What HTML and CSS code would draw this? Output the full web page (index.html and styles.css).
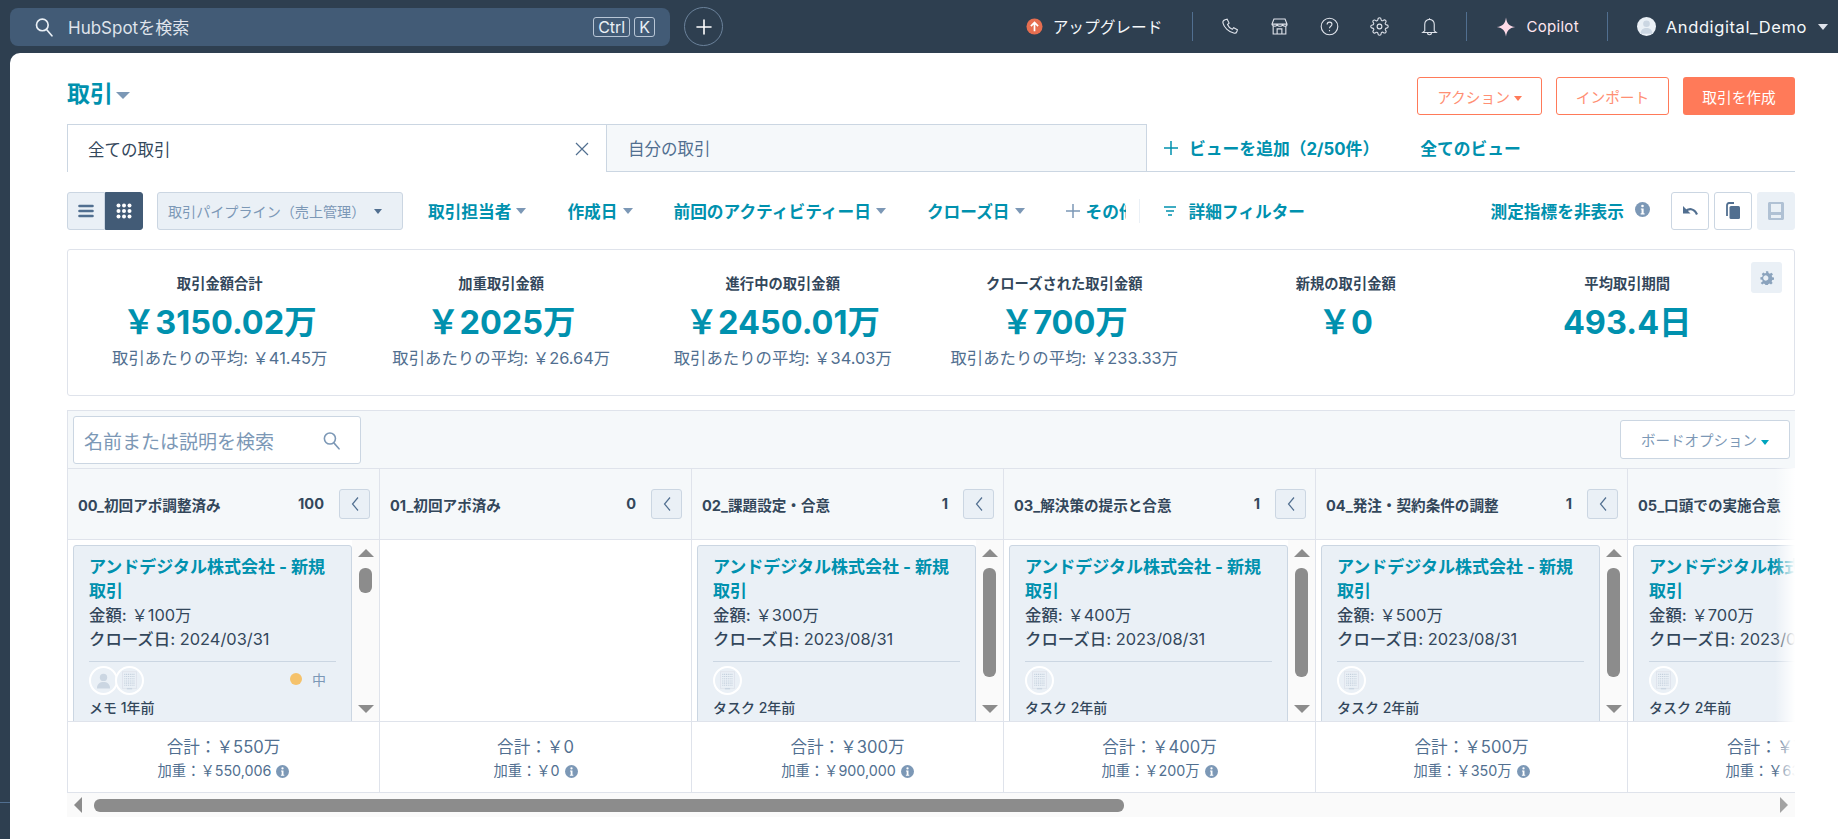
FILE: index.html
```html
<!DOCTYPE html>
<html lang="ja">

<head>
  <meta charset="UTF-8">
  <title>取引</title>
  <link rel="stylesheet" href="styles.css">
</head>

<body>
  <svg class="sprite">
    <symbol id="i-search" viewBox="0 0 24 24"><circle cx="10" cy="9.5" r="7" fill="none" stroke="currentColor" stroke-width="2"/><path d="M15 15l6.5 7.5" fill="none" stroke="currentColor" stroke-width="2" stroke-linecap="round"/></symbol>
    <symbol id="i-info" viewBox="0 0 16 16"><circle cx="8" cy="8" r="8" fill="#7c98b6"/><circle cx="8" cy="4.2" r="1.4" fill="#fff"/><path d="M6.2 6.8h3v5.2h1v1.2H6v-1.2h1V8H6.2z" fill="#fff"/></symbol>
    <symbol id="i-building" viewBox="0 0 24 24"><rect x="3.5" y="1.5" width="17" height="20" fill="#dfe3eb"/><rect x="4.5" y="2.5" width="15" height="18" fill="#eaf0f6"/><path d="M6 5h12M6 7.5h12M6 10h12M6 12.5h12M6 15h12M6 17.5h12" stroke="#c3cfdc" stroke-width="1.2" stroke-dasharray="1.2 .9"/><rect x="9" y="20.5" width="6" height="1.6" fill="#cbd6e2"/></symbol>
    <symbol id="i-person" viewBox="0 0 24 24"><circle cx="12" cy="8.5" r="4.2" fill="#cbd6e2"/><path d="M4.5 21c0-5 3.5-7.2 7.5-7.2s7.5 2.2 7.5 7.2z" fill="#cbd6e2"/></symbol>
  </svg>

  <header class="topbar">
    <div class="global-search">
      <svg class="global-search-icon"><use href="#i-search"/></svg>
      <span class="global-search-text">HubSpotを検索</span>
      <span class="key">Ctrl</span>
      <span class="key">K</span>
    </div>
    <button class="add-btn">
      <svg viewBox="0 0 16 16" width="16" height="16"><path d="M8 1v14M1 8h14" stroke="#fff" stroke-width="1.6" stroke-linecap="round"/></svg>
    </button>

    <div class="top-right">
      <svg class="upgrade-icon" viewBox="0 0 18 18"><circle cx="9" cy="9" r="8.5" fill="#e66e50"/><path d="M9 14V5M5.2 8.5L9 4.7l3.8 3.8" fill="none" stroke="#fff" stroke-width="1.8"/></svg>
      <span class="upgrade-text">アップグレード</span>
      <span class="top-divider divider-upgrade"></span>
      <div class="top-icons">
        <svg viewBox="0 0 24 24"><path d="M6.5 3.5l2.5-.8 2.5 5-2 1.800c1 2.700 3.300 5 6 6l1.800-2 4.700 2.700-.8 2.400c-.5 1.500-2.200 2.200-3.900 1.700C10.500 18.400 5 13 3.700 7.300 3.300 5.600 4.900 4 6.500 3.500z" /></svg>
        <svg viewBox="0 0 24 24"><path d="M5 2.500h14l2.500 6.500c0 1.600-1.300 2.600-2.800 2.600S16 10.600 16 9.300c0 1.300-1.300 2.300-2.800 2.300H12c-1.500 0-3-1-3-2.300 0 1.300-1.300 2.300-2.800 2.300-1.500 0-3.700-1-3.700-2.600zM2.500 9h19M4 11.500v10h16v-10M9 21.500V15h6v6.500" /></svg>
        <svg viewBox="0 0 24 24"><circle cx="12" cy="12" r="10.5"/><path d="M9 9.500c0-1.900 1.400-3 3.100-3s3 1.200 3 2.800c0 2.400-3.100 2.400-3.100 5"/><path d="M12 16.500v1.500"/></svg>
        <svg viewBox="0 0 24 24"><circle cx="12" cy="12" r="3"/><path d="M19.400 15a1.650 1.650 0 0 0 .33 1.820l.06.06a2 2 0 0 1 0 2.830 2 2 0 0 1-2.830 0l-.06-.06a1.650 1.650 0 0 0-1.820-.33 1.650 1.650 0 0 0-1 1.510V21a2 2 0 0 1-2 2 2 2 0 0 1-2-2v-.09A1.650 1.650 0 0 0 9 19.400a1.650 1.650 0 0 0-1.820.33l-.06.06a2 2 0 0 1-2.830 0 2 2 0 0 1 0-2.830l.06-.06a1.650 1.650 0 0 0 .33-1.820 1.650 1.650 0 0 0-1.510-1H3a2 2 0 0 1-2-2 2 2 0 0 1 2-2h.09A1.650 1.650 0 0 0 4.600 9a1.650 1.650 0 0 0-.33-1.820l-.06-.06a2 2 0 0 1 0-2.830 2 2 0 0 1 2.830 0l.06.06a1.650 1.650 0 0 0 1.820.33H9a1.650 1.650 0 0 0 1-1.510V3a2 2 0 0 1 2-2 2 2 0 0 1 2 2v.09a1.650 1.650 0 0 0 1 1.510 1.650 1.650 0 0 0 1.820-.33l.06-.06a2 2 0 0 1 2.830 0 2 2 0 0 1 0 2.830l-.06.06a1.650 1.650 0 0 0-.33 1.820V9a1.650 1.650 0 0 0 1.510 1H21a2 2 0 0 1 2 2 2 2 0 0 1-2 2h-.09a1.650 1.650 0 0 0-1.510 1z"/></svg>
        <svg viewBox="0 0 24 24"><path d="M6 17.500V9a6 6 0 0 1 12 0v8.500l2.500 2h-17zM12 3V1.500M9.500 20a2.500 2.500 0 0 0 5 0"/></svg>
      </div>
      <span class="top-divider divider-icons"></span>
      <svg class="copilot-icon" viewBox="0 0 24 24"><path d="M12 .5c.9 7.200 3.800 10.300 11 11.500-7.200 1.200-10.100 4.300-11 11.500C11.100 16.300 8.200 13.200 1 12 8.200 10.800 11.100 7.700 12 .5z" fill="#ffdbe8"/></svg>
      <span class="copilot-text">Copilot</span>
      <span class="top-divider divider-copilot"></span>
      <span class="user-avatar"><svg viewBox="0 0 24 24" width="19" height="19"><use href="#i-person"/></svg></span>
      <span class="user-name">Anddigital_Demo</span>
      <span class="caret caret-user"></span>
    </div>
  </header>

  <main class="page">
    <div class="page-head">
      <h1 class="page-title">取引<span class="caret caret-title"></span></h1>
      <div class="page-actions">
        <button class="btn btn-outline btn-action">アクション<span class="caret caret-orange"></span></button>
        <button class="btn btn-outline btn-import">インポート</button>
        <button class="btn btn-primary">取引を作成</button>
      </div>
    </div>

    <div class="tabs">
      <div class="tab tab-active">
        <span>全ての取引</span>
        <svg viewBox="0 0 14 14" width="14" height="14"><path d="M1 1l12 12M13 1L1 13" stroke="#516f90" stroke-width="1.2"/></svg>
      </div>
      <div class="tab tab-other">自分の取引</div>
      <div class="tabs-rest">
        <svg viewBox="0 0 14 14" width="14" height="14"><path d="M7 0v14M0 7h14" stroke="#0091ae" stroke-width="1.5"/></svg>
        <span class="tabs-add">ビューを追加（2/50件）</span>
        <span class="tabs-all">全てのビュー</span>
      </div>
    </div>

    <div class="toolbar">
      <div class="view-toggle">
        <span class="toggle-btn">
          <svg viewBox="0 0 16 14" width="16" height="14"><path d="M1.5 2h13M1.5 7h13M1.5 12h13" stroke="#516f90" stroke-width="2.6" stroke-linecap="round"/></svg>
        </span>
        <span class="toggle-btn toggle-on">
          <svg viewBox="0 0 16 16" width="16" height="16" fill="#fff"><circle cx="2.5" cy="2.5" r="2"/><circle cx="8" cy="2.5" r="2"/><circle cx="13.5" cy="2.5" r="2"/><circle cx="2.5" cy="8" r="2"/><circle cx="8" cy="8" r="2"/><circle cx="13.5" cy="8" r="2"/><circle cx="2.5" cy="13.5" r="2"/><circle cx="8" cy="13.5" r="2"/><circle cx="13.5" cy="13.5" r="2"/></svg>
        </span>
      </div>
      <div class="pipeline-select">取引パイプライン（売上管理）<span class="caret caret-dark"></span></div>
      <span class="filter filter-first">取引担当者<span class="caret"></span></span>
      <span class="filter">作成日<span class="caret"></span></span>
      <span class="filter">前回のアクティビティー日<span class="caret"></span></span>
      <span class="filter">クローズ日<span class="caret"></span></span>
      <span class="filter filter-more">
        <svg viewBox="0 0 14 14" width="14" height="14"><path d="M7 0v14M0 7h14" stroke="#7c98b6" stroke-width="1.5"/></svg>その他
      </span>
      <span class="filter-divider"></span>
      <span class="filter filter-advanced">
        <svg viewBox="0 0 14 12" width="14" height="12"><path d="M1 2h12M3 6h8M5 10h4" stroke="#0091ae" stroke-width="1.5"/></svg>詳細フィルター
      </span>
      <span class="metrics-toggle">測定指標を非表示</span>
      <svg class="metrics-info"><use href="#i-info"/></svg>
      <span class="icon-btn icon-btn-undo">
        <svg viewBox="0 0 18 18" width="18" height="18"><path d="M2 4v7.500h7.500z" fill="#516f90"/><path d="M4.500 9.500C7.500 6 13 6 16 12.500" fill="none" stroke="#516f90" stroke-width="2.200"/></svg>
      </span>
      <span class="icon-btn">
        <svg viewBox="0 0 16 18" width="16" height="18"><path d="M2 14V3.500C2 2.500 2.700 1 4 1h5" fill="none" stroke="#516f90" stroke-width="1.8"/><rect x="4.5" y="4" width="10.5" height="13" rx="1.5" fill="#516f90"/></svg>
      </span>
      <span class="icon-btn icon-btn-off">
        <svg viewBox="0 0 16 18" width="16" height="18"><path d="M0 1.500C0 .7.700 0 1.500 0h13c.8 0 1.500.7 1.500 1.500v15c0 .8-.7 1.500-1.500 1.500h-13C.7 18 0 17.300 0 16.500zM3 2v8h10V2zM3 13v3h10v-3z" fill="#b0c1d4"/></svg>
      </span>
    </div>

    <section class="metrics">
      <div class="metric">
        <div class="metric-label">取引金額合計</div>
        <div class="metric-value">￥3150.02万</div>
        <div class="metric-sub">取引あたりの平均: ￥41.45万</div>
      </div>
      <div class="metric">
        <div class="metric-label">加重取引金額</div>
        <div class="metric-value">￥2025万</div>
        <div class="metric-sub">取引あたりの平均: ￥26.64万</div>
      </div>
      <div class="metric">
        <div class="metric-label">進行中の取引金額</div>
        <div class="metric-value">￥2450.01万</div>
        <div class="metric-sub">取引あたりの平均: ￥34.03万</div>
      </div>
      <div class="metric">
        <div class="metric-label">クローズされた取引金額</div>
        <div class="metric-value">￥700万</div>
        <div class="metric-sub">取引あたりの平均: ￥233.33万</div>
      </div>
      <div class="metric">
        <div class="metric-label">新規の取引金額</div>
        <div class="metric-value">￥0</div>
      </div>
      <div class="metric">
        <div class="metric-label">平均取引期間</div>
        <div class="metric-value">493.4日</div>
      </div>
      <span class="metrics-gear">
        <svg viewBox="0 0 24 24" width="14" height="14"><path d="M10 1h4l.6 3 2.300 1 2.600-1.700 2.800 2.800L20 8.700l1 2.300 3 .6v3.800l-3 .6-1 2.300 1.700 2.600-2.800 2.800-2.600-1.700-2.300 1-.6 3h-4l-.6-3-2.300-1-2.600 1.700-2.800-2.800L4.700 18l-1-2.300-3-.6v-3.800l3-.6 1-2.300-1.700-2.600 2.800-2.800 2.600 1.700 2.300-1zM12 8.500a4.500 4.500 0 1 0 0 8 4.500 4.500 0 0 0 0-8z" fill="#8ba3bd" fill-rule="evenodd" transform="translate(0 -.5)"/></svg>
      </span>
    </section>

    <section class="board">
      <div class="board-top">
        <div class="board-search">
          <span>名前または説明を検索</span>
          <svg class="board-search-icon"><use href="#i-search"/></svg>
        </div>
        <button class="board-options">ボードオプション<span class="caret caret-teal"></span></button>
      </div>

      <div class="columns">
        <div class="col">
          <div class="col-head">
            <span class="col-name">00_初回アポ調整済み</span>
            <span class="col-count">100</span>
            <span class="collapse"><svg viewBox="0 0 10 16" width="10" height="16"><path d="M8 1.5L2.500 8 8 14.500" fill="none" stroke="#516f90" stroke-width="1.2"/></svg></span>
          </div>
          <div class="col-body">
            <article class="card">
              <a class="card-title">アンドデジタル株式会社 - 新規取引</a>
              <div class="card-line"><b>金額:</b> ￥100万</div>
              <div class="card-line"><b>クローズ日:</b> 2024/03/31</div>
              <div class="card-foot">
                <span class="avatar"><svg><use href="#i-person"/></svg></span>
                <span class="avatar avatar-second"><svg><use href="#i-building"/></svg></span>
                <span class="priority"><i class="priority-dot"></i>中</span>
              </div>
              <div class="card-activity">メモ 1年前</div>
            </article>
            <div class="vscroll"><span class="arrow-up"></span><span class="thumb thumb-short"></span><span class="arrow-down"></span></div>
          </div>
          <div class="col-foot">
            <div class="col-total">合計：￥550万</div>
            <div class="col-weighted">加重：￥550,006 <svg><use href="#i-info"/></svg></div>
          </div>
        </div>

        <div class="col">
          <div class="col-head">
            <span class="col-name">01_初回アポ済み</span>
            <span class="col-count">0</span>
            <span class="collapse"><svg viewBox="0 0 10 16" width="10" height="16"><path d="M8 1.5L2.500 8 8 14.500" fill="none" stroke="#516f90" stroke-width="1.2"/></svg></span>
          </div>
          <div class="col-body"></div>
          <div class="col-foot">
            <div class="col-total">合計：￥0</div>
            <div class="col-weighted">加重：￥0 <svg><use href="#i-info"/></svg></div>
          </div>
        </div>

        <div class="col">
          <div class="col-head">
            <span class="col-name">02_課題設定・合意</span>
            <span class="col-count">1</span>
            <span class="collapse"><svg viewBox="0 0 10 16" width="10" height="16"><path d="M8 1.5L2.500 8 8 14.500" fill="none" stroke="#516f90" stroke-width="1.2"/></svg></span>
          </div>
          <div class="col-body">
            <article class="card">
              <a class="card-title">アンドデジタル株式会社 - 新規取引</a>
              <div class="card-line"><b>金額:</b> ￥300万</div>
              <div class="card-line"><b>クローズ日:</b> 2023/08/31</div>
              <div class="card-foot">
                <span class="avatar"><svg><use href="#i-building"/></svg></span>
              </div>
              <div class="card-activity">タスク 2年前</div>
            </article>
            <div class="vscroll"><span class="arrow-up"></span><span class="thumb thumb-long"></span><span class="arrow-down"></span></div>
          </div>
          <div class="col-foot">
            <div class="col-total">合計：￥300万</div>
            <div class="col-weighted">加重：￥900,000 <svg><use href="#i-info"/></svg></div>
          </div>
        </div>

        <div class="col">
          <div class="col-head">
            <span class="col-name">03_解決策の提示と合意</span>
            <span class="col-count">1</span>
            <span class="collapse"><svg viewBox="0 0 10 16" width="10" height="16"><path d="M8 1.5L2.500 8 8 14.500" fill="none" stroke="#516f90" stroke-width="1.2"/></svg></span>
          </div>
          <div class="col-body">
            <article class="card">
              <a class="card-title">アンドデジタル株式会社 - 新規取引</a>
              <div class="card-line"><b>金額:</b> ￥400万</div>
              <div class="card-line"><b>クローズ日:</b> 2023/08/31</div>
              <div class="card-foot">
                <span class="avatar"><svg><use href="#i-building"/></svg></span>
              </div>
              <div class="card-activity">タスク 2年前</div>
            </article>
            <div class="vscroll"><span class="arrow-up"></span><span class="thumb thumb-long"></span><span class="arrow-down"></span></div>
          </div>
          <div class="col-foot">
            <div class="col-total">合計：￥400万</div>
            <div class="col-weighted">加重：￥200万 <svg><use href="#i-info"/></svg></div>
          </div>
        </div>

        <div class="col">
          <div class="col-head">
            <span class="col-name">04_発注・契約条件の調整</span>
            <span class="col-count">1</span>
            <span class="collapse"><svg viewBox="0 0 10 16" width="10" height="16"><path d="M8 1.5L2.500 8 8 14.500" fill="none" stroke="#516f90" stroke-width="1.2"/></svg></span>
          </div>
          <div class="col-body">
            <article class="card">
              <a class="card-title">アンドデジタル株式会社 - 新規取引</a>
              <div class="card-line"><b>金額:</b> ￥500万</div>
              <div class="card-line"><b>クローズ日:</b> 2023/08/31</div>
              <div class="card-foot">
                <span class="avatar"><svg><use href="#i-building"/></svg></span>
              </div>
              <div class="card-activity">タスク 2年前</div>
            </article>
            <div class="vscroll"><span class="arrow-up"></span><span class="thumb thumb-long"></span><span class="arrow-down"></span></div>
          </div>
          <div class="col-foot">
            <div class="col-total">合計：￥500万</div>
            <div class="col-weighted">加重：￥350万 <svg><use href="#i-info"/></svg></div>
          </div>
        </div>

        <div class="col">
          <div class="col-head">
            <span class="col-name">05_口頭での実施合意</span>
            <span class="col-count">1</span>
            <span class="collapse"><svg viewBox="0 0 10 16" width="10" height="16"><path d="M8 1.5L2.500 8 8 14.500" fill="none" stroke="#516f90" stroke-width="1.2"/></svg></span>
          </div>
          <div class="col-body">
            <article class="card">
              <a class="card-title">アンドデジタル株式会社 - 新規取引</a>
              <div class="card-line"><b>金額:</b> ￥700万</div>
              <div class="card-line"><b>クローズ日:</b> 2023/08/31</div>
              <div class="card-foot">
                <span class="avatar"><svg><use href="#i-building"/></svg></span>
              </div>
              <div class="card-activity">タスク 2年前</div>
            </article>
          </div>
          <div class="col-foot">
            <div class="col-total">合計：￥700万</div>
            <div class="col-weighted">加重：￥630万 <svg><use href="#i-info"/></svg></div>
          </div>
        </div>
        <div class="columns-fade"></div>
      </div>

      <div class="hscroll">
        <span class="arrow-left"></span>
        <span class="hthumb"></span>
        <span class="arrow-right"></span>
      </div>
    </section>
  </main>
</body>

</html>
```

FILE: styles.css
```css
* {
  box-sizing: border-box;
}

html,
body {
  margin: 0;
  height: 100%;
  overflow: hidden;
}

body {
  background: linear-gradient(#2e3f50 802px, #516f90 802px, #516f90 803px, #2e3f50 803px);
  color: #33475b;
  font-family: "Inter", "Noto Sans CJK JP", sans-serif;
  font-size: 14px;
}

button {
  font-family: inherit;
  cursor: pointer;
}

.sprite {
  position: absolute;
  width: 0;
  height: 0;
}

/* caret */
.caret {
  display: inline-block;
  width: 0;
  height: 0;
  margin-left: 5px;
  vertical-align: middle;
  border-left: 5px solid transparent;
  border-right: 5px solid transparent;
  border-top: 6px solid #7c98b6;
}

/* top bar */
.topbar {
  display: flex;
  align-items: center;
  height: 53px;
  padding: 0 10px;
}

.global-search {
  display: flex;
  align-items: center;
  width: 660px;
  height: 38px;
  padding: 0 15px 0 24px;
  background: #425b76;
  border-radius: 8px;
  color: #eaf0f6;
}

.global-search-icon {
  width: 20px;
  height: 20px;
  color: #eaf0f6;
}

.global-search-text {
  margin-left: 14px;
  margin-right: auto;
  font-size: 17px;
  color: #dfe3eb;
}

.key {
  height: 20px;
  margin-left: 4px;
  padding: 0 4px;
  border: 1px solid #b8c6d6;
  border-radius: 3px;
  font-size: 16px;
  line-height: 18px;
}

.add-btn {
  display: flex;
  align-items: center;
  justify-content: center;
  width: 39px;
  height: 39px;
  margin-left: 14px;
  padding: 0;
  background: transparent;
  border: 1px solid #6b829b;
  border-radius: 50%;
}

.top-right {
  display: flex;
  align-items: center;
  margin-left: auto;
  color: #f5f8fa;
}

.upgrade-icon {
  width: 17px;
  height: 17px;
}

.upgrade-text {
  margin-left: 10px;
  font-size: 15.7px;
}

.top-divider {
  width: 1px;
  height: 29px;
  background: #516f90;
}

.divider-upgrade {
  margin-left: 30px;
}

.top-icons {
  display: flex;
  gap: 31px;
  margin-left: 27px;
}

.top-icons svg {
  width: 19px;
  height: 19px;
  fill: none;
  stroke: #dfe3eb;
  stroke-width: 1.4;
}

.divider-icons {
  margin-left: 27px;
}

.copilot-icon {
  width: 20px;
  height: 20px;
  margin-left: 29px;
}

.copilot-text {
  margin-left: 10px;
  font-size: 15px;
  letter-spacing: 0.3px;
  color: #ffe6ef;
}

.divider-copilot {
  margin-left: 28px;
}

.user-avatar {
  display: flex;
  width: 19px;
  height: 19px;
  margin-left: 29px;
  background: #eaf0f6;
  border-radius: 50%;
  overflow: hidden;
}

.user-name {
  margin-left: 10px;
  font-size: 16.5px;
  letter-spacing: 0.6px;
}

.caret-user {
  margin-left: 11px;
  border-top-color: #dfe3eb;
}

/* page */
.page {
  height: 786px;
  margin-left: 10px;
  padding: 24px 43px 0 57px;
  background: #fff;
  border-top-left-radius: 10px;
}

.page-head {
  display: flex;
  justify-content: space-between;
  align-items: flex-start;
  height: 38px;
}

.page-title {
  margin: 0;
  font-size: 23px;
  font-weight: 700;
  line-height: 34px;
  color: #0091ae;
}

.caret-title {
  margin-left: 3px;
  border-left-width: 7px;
  border-right-width: 7px;
  border-top-width: 7px;
}

.page-actions {
  display: flex;
  gap: 14px;
}

.btn {
  height: 38px;
  padding: 0;
  font-size: 14.7px;
  border-radius: 3px;
}

.btn-outline {
  background: #fff;
  border: 1px solid #ff7a59;
  color: #ff8f73;
}

.btn-action {
  width: 125px;
}

.btn-import {
  width: 113px;
}

.btn-primary {
  width: 112px;
  background: #ff7a59;
  border: 0;
  color: #fff;
}

.caret-orange {
  margin-left: 4px;
  border-left-width: 4px;
  border-right-width: 4px;
  border-top: 5px solid #ff7a59;
}

/* tabs */
.tabs {
  display: flex;
  height: 48px;
  margin-top: 9px;
}

.tab {
  display: flex;
  align-items: center;
  border: 1px solid #cbd6e2;
  font-size: 16.5px;
}

.tab-active {
  justify-content: space-between;
  width: 539px;
  padding: 0 17px 0 20px;
  border-right: 0;
  border-bottom: 0;
}

.tab-other {
  width: 541px;
  padding-left: 21px;
  background: #f5f8fa;
  color: #516f90;
}

.tabs-rest {
  display: flex;
  flex: 1;
  align-items: center;
  padding-left: 17px;
  border-bottom: 1px solid #cbd6e2;
  font-size: 16.8px;
  font-weight: 700;
  color: #0091ae;
}

.tabs-add {
  margin-left: 11px;
}

.tabs-all {
  margin-left: 41px;
}

/* toolbar */
.toolbar {
  display: flex;
  align-items: center;
  height: 38px;
  margin-top: 20px;
}

.view-toggle {
  display: flex;
  height: 38px;
}

.toggle-btn {
  display: flex;
  align-items: center;
  justify-content: center;
  width: 38px;
  background: #eaf0f6;
  border: 1px solid #cbd6e2;
  border-radius: 3px 0 0 3px;
}

.toggle-on {
  background: #425b76;
  border-color: #425b76;
  border-radius: 0 3px 3px 0;
}

.pipeline-select {
  display: flex;
  align-items: center;
  width: 246px;
  height: 38px;
  margin-left: 14px;
  padding-left: 10px;
  background: #eaf0f6;
  border: 1px solid #cbd6e2;
  border-radius: 3px;
  font-size: 14.1px;
  color: #7c98b6;
}

.caret-dark {
  margin-left: 9px;
  border-left-width: 4px;
  border-right-width: 4px;
  border-top: 5px solid #516f90;
}

.filter {
  display: flex;
  align-items: center;
  margin-left: 41px;
  font-size: 16.7px;
  font-weight: 700;
  color: #0091ae;
  white-space: nowrap;
}

.filter-first {
  margin-left: 25px;
}

.filter-more {
  width: 60px;
  overflow: hidden;
  flex-shrink: 0;
}

.filter-more svg {
  flex-shrink: 0;
  margin-right: 6px;
}

.filter-divider {
  width: 1px;
  height: 24px;
  margin-left: 13px;
  background: #eaf0f6;
}

.filter-advanced {
  margin-left: 23px;
}

.filter-advanced svg {
  margin-right: 12px;
}

.metrics-toggle {
  margin-left: auto;
  font-size: 16.7px;
  font-weight: 700;
  color: #0091ae;
}

.metrics-info {
  width: 15px;
  height: 15px;
  margin: 0 21px 4px 11px;
}

.icon-btn {
  display: flex;
  align-items: center;
  justify-content: center;
  width: 38px;
  height: 38px;
  margin-left: 5px;
  background: #fff;
  border: 1px solid #cbd6e2;
  border-radius: 3px;
}

.icon-btn-undo {
  margin-left: 0;
}

.icon-btn-off {
  background: #eaf0f6;
  border-color: #eaf0f6;
}

/* metrics card */
.metrics {
  position: relative;
  display: grid;
  grid-template-columns: repeat(6, 281.5px);
  height: 147px;
  margin-top: 19px;
  padding: 24px 0 0 11px;
  border: 1px solid #dfe3eb;
  border-radius: 3px;
}

.metric {
  text-align: center;
}

.metric-label {
  font-size: 14.3px;
  font-weight: 700;
  line-height: 20px;
}

.metric-value {
  margin-top: 7px;
  font-size: 32.5px;
  font-weight: 700;
  line-height: 44px;
  color: #0091ae;
}

.metric-sub {
  margin-top: 1px;
  font-size: 16.4px;
  line-height: 24px;
  color: #516f90;
}

.metrics-gear {
  position: absolute;
  top: 12px;
  right: 12px;
  display: flex;
  align-items: center;
  justify-content: center;
  width: 31px;
  height: 31px;
  background: #eaf0f6;
  border-radius: 3px;
}

/* board */
.board {
  position: relative;
  height: 407px;
  margin-top: 14px;
}

.board-top {
  display: flex;
  align-items: flex-start;
  justify-content: space-between;
  height: 58px;
  padding: 5px 5px 0 5px;
  background: #f5f8fa;
  border: 1px solid #dfe3eb;
  border-right: 0;
  border-bottom: 0;
}

.board-search {
  display: flex;
  align-items: center;
  justify-content: space-between;
  width: 288px;
  height: 48px;
  padding: 0 19px 0 10px;
  background: #fff;
  border: 1px solid #cbd6e2;
  border-radius: 3px;
  font-size: 19px;
  color: #7c98b6;
}

.board-search-icon {
  width: 19px;
  height: 19px;
  color: #7c98b6;
}

.board-options {
  width: 170px;
  height: 39px;
  margin-top: 4px;
  background: #fff;
  border: 1px solid #cbd6e2;
  border-radius: 3px;
  font-size: 14.5px;
  color: #7c98b6;
}

.caret-teal {
  margin-left: 4px;
  border-left-width: 4px;
  border-right-width: 4px;
  border-top: 5px solid #00a4bd;
}

.columns {
  position: relative;
  display: flex;
  height: 325px;
  overflow: hidden;
  border-bottom: 1px solid #dfe3eb;
}

.columns-fade {
  position: absolute;
  top: 0;
  right: 0;
  width: 20px;
  height: 100%;
  background: linear-gradient(90deg, rgba(255, 255, 255, 0), #fff);
}

.col {
  flex: 0 0 312px;
  display: flex;
  flex-direction: column;
  border-left: 1px solid #dfe3eb;
}

.col-head {
  display: flex;
  align-items: center;
  height: 72px;
  padding: 0 9px 0 10px;
  background: #f5f8fa;
  border-top: 1px solid #dfe3eb;
  border-bottom: 1px solid #dfe3eb;
  font-weight: 700;
  font-size: 14.6px;
  white-space: nowrap;
}

.col-name {
  margin-right: auto;
}

.col-count {
  margin-right: 15px;
}

.collapse {
  display: flex;
  align-items: center;
  justify-content: center;
  flex-shrink: 0;
  width: 31px;
  height: 30px;
  background: #eaf0f6;
  border: 1px solid #cbd6e2;
  border-radius: 3px;
}

.col-body {
  display: flex;
  flex: 0 0 181px;
  height: 181px;
  overflow: hidden;
  background: #fff;
}

.card {
  flex: 0 0 279px;
  height: 200px;
  margin: 5px 0 0 5px;
  padding: 10px 15px;
  background: #eaf0f6;
  border: 1px solid #cbd6e2;
  border-radius: 3px;
}

.card-title {
  display: block;
  font-size: 17px;
  font-weight: 700;
  line-height: 23.5px;
  color: #0091ae;
}

.card-line {
  font-size: 16.4px;
  line-height: 24px;
}

.card-line b {
  font-weight: 500;
}

.card-foot {
  display: flex;
  align-items: flex-start;
  height: 35px;
  margin-top: 10px;
  padding-top: 4px;
  border-top: 1px solid #cbd6e2;
}

.avatar {
  display: flex;
  align-items: center;
  justify-content: center;
  width: 29px;
  height: 29px;
  background: #eaf0f6;
  border: 2px solid #fff;
  border-radius: 50%;
}

.avatar svg {
  width: 21px;
  height: 21px;
}

.avatar-second {
  margin-left: -3px;
}

.priority {
  display: flex;
  align-items: center;
  margin-left: auto;
  margin-right: 10px;
  padding-top: 3px;
  font-size: 14px;
  color: #7c98b6;
}

.priority-dot {
  width: 12px;
  height: 12px;
  margin-right: 10px;
  background: #f5c26b;
  border-radius: 50%;
}

.card-activity {
  margin-top: 2px;
  font-size: 14px;
  font-weight: 500;
  line-height: 20px;
}

.vscroll {
  display: flex;
  flex: 1;
  flex-direction: column;
  align-items: center;
  padding: 9px 0 8px;
  background: #fafafa;
}

.arrow-up {
  width: 0;
  height: 0;
  border-left: 8px solid transparent;
  border-right: 8px solid transparent;
  border-bottom: 8px solid #8c8c8c;
}

.arrow-down {
  width: 0;
  height: 0;
  margin-top: auto;
  border-left: 8px solid transparent;
  border-right: 8px solid transparent;
  border-top: 8px solid #8c8c8c;
}

.thumb {
  width: 13px;
  margin-top: 11px;
  background: #8c8c8c;
  border-radius: 6px;
}

.thumb-short {
  height: 25px;
}

.thumb-long {
  height: 109px;
}

.col-foot {
  flex: 1;
  padding-top: 13px;
  background: #fff;
  border-top: 1px solid #dfe3eb;
  text-align: center;
  white-space: nowrap;
  color: #516f90;
}

.col-total {
  font-size: 16.6px;
  line-height: 24px;
}

.col-weighted {
  display: flex;
  align-items: center;
  justify-content: center;
  margin-top: 2px;
  font-size: 14.3px;
  line-height: 20px;
}

.col-weighted svg {
  width: 13px;
  height: 13px;
  margin-left: 5px;
}

.hscroll {
  display: flex;
  align-items: center;
  height: 24px;
  padding: 0 7px;
  background: #fafafa;
}

.arrow-left {
  width: 0;
  height: 0;
  border-top: 8px solid transparent;
  border-bottom: 8px solid transparent;
  border-right: 8px solid #8c8c8c;
}

.arrow-right {
  width: 0;
  height: 0;
  margin-left: auto;
  border-top: 8px solid transparent;
  border-bottom: 8px solid transparent;
  border-left: 8px solid #a3a3a3;
}

.hthumb {
  width: 1030px;
  height: 13px;
  margin-left: 12px;
  background: #8c8c8c;
  border-radius: 6px;
}
```
